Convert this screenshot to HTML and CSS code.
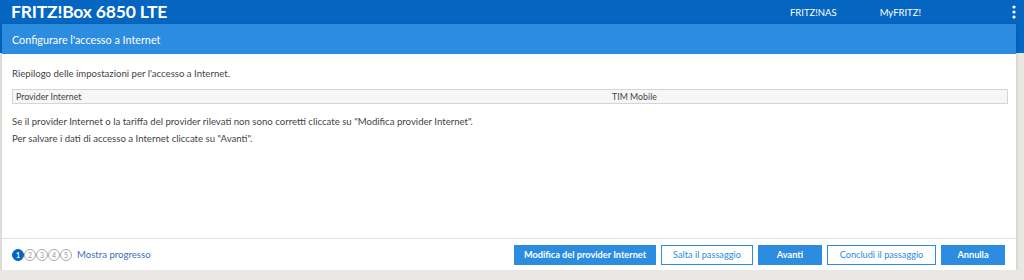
FILE: index.html
```html
<!DOCTYPE html>
<html>
<head>
  <title>FRITZ!Box 6850 LTE</title>
  <link rel="stylesheet" href="styles.css">
</head>
<body>
  <div class="topbar">
    <div class="brand">FRITZ!Box 6850 LTE</div>
    <div class="toplinks">
      <span>FRITZ!NAS</span>
      <span>MyFRITZ!</span>
      <svg class="kebab" width="4" height="14" viewBox="0 0 4 14">
        <circle cx="2" cy="2" r="1.6" fill="#fff"/>
        <circle cx="2" cy="7" r="1.6" fill="#fff"/>
        <circle cx="2" cy="12" r="1.6" fill="#fff"/>
      </svg>
    </div>
  </div>

  <div class="card">
    <div class="card-head">Configurare l'accesso a Internet</div>
    <div class="card-body">
      <p class="intro">Riepilogo delle impostazioni per l'accesso a Internet.</p>
      <div class="row">
        <div class="cell label">Provider Internet</div>
        <div class="cell value">TIM Mobile</div>
      </div>
      <p class="note">Se il provider Internet o la tariffa del provider rilevati non sono corretti cliccate su "Modifica provider Internet".</p>
      <p class="note">Per salvare i dati di accesso a Internet cliccate su "Avanti".</p>
    </div>
    <div class="card-foot">
      <div class="steps">
        <span class="step active">1</span>
        <span class="step">2</span>
        <span class="step">3</span>
        <span class="step">4</span>
        <span class="step">5</span>
        <a class="progress" href="#">Mostra progresso</a>
      </div>
      <div class="buttons">
        <button class="btn primary w-mod">Modifica del provider Internet</button>
        <button class="btn outline w-salta">Salta il passaggio</button>
        <button class="btn primary w-short">Avanti</button>
        <button class="btn outline w-concl">Concludi il passaggio</button>
        <button class="btn primary w-short">Annulla</button>
      </div>
    </div>
  </div>
</body>
</html>
```

FILE: styles.css
```css
body {
  margin: 0;
  background: #eae8e5;
  font-family: "Lato", "Open Sans", sans-serif;
  color: #444;
}
.topbar {
  background: #0566c2;
  height: 53px;
  display: flex;
  justify-content: space-between;
  color: #fff;
}
.brand {
  font-weight: bold;
  font-size: 17.5px;
  letter-spacing: -0.2px;
  padding: 1px 0 0 11px;
  line-height: 22px;
}
.toplinks {
  display: flex;
  align-items: flex-start;
  font-size: 9.5px;
  padding-top: 7px;
}
.toplinks span {
  margin-right: 43px;
}
.kebab {
  margin: -2px 8px 0 48px;
}
.card {
  margin: -29px 8px 0 2px;
  background: #fff;
  box-shadow: 0 1px 4px rgba(0,0,0,0.18);
}
.card-head {
  background: #2b8ce0;
  color: #fff;
  font-size: 10.8px;
  height: 30px;
  line-height: 32px;
  padding-left: 10px;
}
.card-body {
  padding: 12px 8px 0 10px;
  height: 184px;
  box-sizing: border-box;
  font-size: 9.6px;
}
.intro {
  margin: 0 0 8px 0;
  line-height: 15px;
}
.row {
  display: flex;
  border: 1px solid #d6d5d6;
  background: #f7f6f7;
  height: 13px;
  line-height: 13px;
  font-size: 8.8px;
  margin-bottom: 11px;
}
.cell {
  padding-left: 3px;
}
.label {
  width: 593px;
}
.note {
  margin: 0 0 3px 0;
  line-height: 14px;
}
.card-foot {
  border-top: 1px solid #e4e3e3;
  height: 31px;
  display: flex;
  justify-content: space-between;
  align-items: center;
  padding: 0 11px 0 10px;
}
.steps {
  display: flex;
  align-items: center;
}
.step {
  width: 10px;
  height: 10px;
  border: 1px solid #aaa;
  border-radius: 50%;
  font-size: 7px;
  line-height: 10px;
  text-align: center;
  color: #999;
  margin-right: 0;
}
.step.active {
  background: #0566c2;
  border-color: #0566c2;
  color: #fff;
  font-weight: bold;
}
.progress {
  color: #3d6fb6;
  text-decoration: none;
  font-size: 9.6px;
  margin-left: 5px;
}
.buttons {
  display: flex;
  gap: 5px;
}
.btn {
  font-family: "Lato", "Open Sans", sans-serif;
  font-size: 9.2px;
  height: 20px;
  padding: 0;
  border: 1px solid #2b8ce0;
  cursor: pointer;
}
.btn.primary {
  background: #2b8ce0;
  color: #fff;
  font-weight: bold;
}
.btn.outline {
  background: #fff;
  color: #2b8ce0;
}
.w-mod {
  width: 142px;
}
.w-salta {
  width: 92px;
}
.w-short {
  width: 64px;
}
.w-concl {
  width: 109px;
}
```
